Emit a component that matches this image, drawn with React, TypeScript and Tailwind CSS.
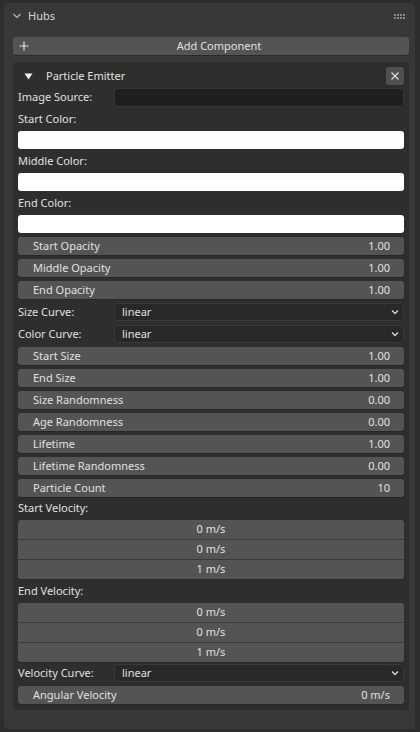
import React from 'react';

const font = { fontFamily: '"Noto Sans", "DejaVu Sans", sans-serif' };

function NumRow({ label, value }: { label: string; value: string }) {
  return (
    <div className="h-[18px] rounded-[3px] bg-[#545454] flex items-center justify-between pl-[15px] pr-[14px] text-[11px] text-[#e0e0e0] shadow-[0_1px_0_#262626]">
      <span>{label}</span>
      <span>{value}</span>
    </div>
  );
}

function Label({ text, h = 24 }: { text: string; h?: number }) {
  return (
    <div className={`flex items-center text-[11px] text-[#e0e0e0] ${h === 24 ? 'h-[24px]' : 'h-[23px]'}`}>{text}</div>
  );
}

function Dropdown({ label }: { label: string }) {
  return (
    <div className="flex items-center h-[18px]">
      <div className="w-[96px] shrink-0 text-[11px] text-[#e0e0e0]">{label}</div>
      <div className="flex-1 h-[18px] rounded-[4px] bg-[#282828] border border-[#3a3a3a] flex items-center justify-between pl-[7px] pr-[4px] text-[11px] text-[#e0e0e0]">
        <span>linear</span>
        <svg width="8" height="6" viewBox="0 0 8 6">
          <path d="M1 1.5 L4 4.5 L7 1.5" fill="none" stroke="#d8d8d8" strokeWidth="1.3" />
        </svg>
      </div>
    </div>
  );
}

function Vector({ values }: { values: string[] }) {
  return (
    <div className="rounded-[3px] overflow-hidden bg-[#3a3a3a] flex flex-col gap-px shadow-[0_1px_0_#262626]">
      {values.map((v, i) => (
        <div key={i} className="h-[19px] bg-[#545454] flex items-center justify-center text-[11px] text-[#e0e0e0]">
          {v}
        </div>
      ))}
    </div>
  );
}

function ColorBar() {
  return <div className="h-[18px] rounded-[3px] bg-white" />;
}

export default function App() {
  return (
    <div className="w-[420px] h-[732px] bg-[#2d2d2d] pt-[3px] pl-[4px] pr-[5px] overflow-hidden" style={font}>
      <div className="h-[726px] bg-[#383838] rounded-[4px] pl-[9px] pr-[6px]">
        {/* panel header */}
        <div className="h-[26px] flex items-center -ml-[9px] -mr-[6px] pl-[8px] pr-[10px]">
          <svg width="10" height="10" viewBox="0 0 10 10" className="mr-[6px]">
            <path d="M1.5 3 L5 6.5 L8.5 3" fill="none" stroke="#bdbdbd" strokeWidth="1.1" />
          </svg>
          <span className="text-[11px] text-[#d8d8d8]">Hubs</span>
          <div className="flex-1" />
          <div className="grid grid-cols-4 gap-[1px]">
            {Array.from({ length: 8 }).map((_, i) => (
              <div key={i} className="w-[2px] h-[2px] bg-[#8a8a8a]" />
            ))}
          </div>
        </div>

        {/* add component */}
        <div className="mt-[8px] h-[18px] rounded-[3px] bg-[#545454] flex items-center relative text-[11px] text-[#e0e0e0] shadow-[0_1px_0_#2a2a2a]">
          <svg width="10" height="10" viewBox="0 0 10 10" className="absolute left-[6px]">
            <path d="M5 0.5 V9.5 M0.5 5 H9.5" stroke="#e0e0e0" strokeWidth="1.2" />
          </svg>
          <span className="w-full text-center pl-[16px]">Add Component</span>
        </div>

        {/* component box */}
        <div className="mt-[7px] h-[648px] rounded-[4px] bg-[#2e2e2e] px-[5px] pt-[5px] flex flex-col">
          <div className="h-[18px] flex items-center">
            <svg width="9" height="7" viewBox="0 0 9 7" className="ml-[6px]">
              <path d="M0.5 0.5 H8.5 L4.5 6.5 Z" fill="#f2f2f2" />
            </svg>
            <span className="ml-[13px] text-[11px] text-[#e0e0e0]">Particle Emitter</span>
            <div className="flex-1" />
            <div className="w-[18px] h-[18px] rounded-[3px] bg-[#505050] flex items-center justify-center">
              <svg width="10" height="10" viewBox="0 0 10 10">
                <path d="M1.5 1.5 L8.5 8.5 M8.5 1.5 L1.5 8.5" stroke="#dedede" strokeWidth="1.2" />
              </svg>
            </div>
          </div>

          <div className="mt-[3px] flex items-center h-[19px]">
            <div className="w-[96px] shrink-0 text-[11px] text-[#e0e0e0]">Image Source:</div>
            <div className="flex-1 h-[19px] rounded-[4px] bg-[#1f1f1f] border border-[#363636]" />
          </div>

          <Label text="Start Color:" />
          <ColorBar />
          <Label text="Middle Color:" />
          <ColorBar />
          <Label text="End Color:" />
          <ColorBar />

          <div className="mt-[4px] flex flex-col gap-[4px]">
            <NumRow label="Start Opacity" value="1.00" />
            <NumRow label="Middle Opacity" value="1.00" />
            <NumRow label="End Opacity" value="1.00" />
            <Dropdown label="Size Curve:" />
            <Dropdown label="Color Curve:" />
            <NumRow label="Start Size" value="1.00" />
            <NumRow label="End Size" value="1.00" />
            <NumRow label="Size Randomness" value="0.00" />
            <NumRow label="Age Randomness" value="0.00" />
            <NumRow label="Lifetime" value="1.00" />
            <NumRow label="Lifetime Randomness" value="0.00" />
            <NumRow label="Particle Count" value="10" />
          </div>

          <Label text="Start Velocity:" h={23} />
          <Vector values={['0 m/s', '0 m/s', '1 m/s']} />
          <Label text="End Velocity:" />
          <Vector values={['0 m/s', '0 m/s', '1 m/s']} />

          <div className="mt-[2px] flex flex-col gap-[4px]">
            <Dropdown label="Velocity Curve:" />
            <NumRow label="Angular Velocity" value="0 m/s" />
          </div>
        </div>
      </div>
    </div>
  );
}
